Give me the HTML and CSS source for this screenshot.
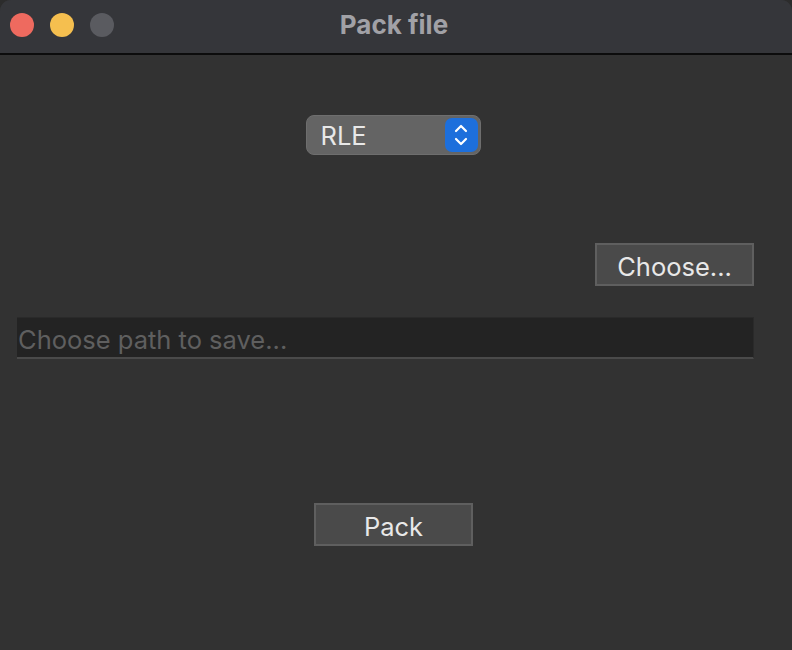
FILE: index.html
```html
<!DOCTYPE html>
<html>
<head>
<meta charset="utf-8">
<link rel="stylesheet" href="styles.css">
</head>
<body>
<div class="window">
  <div class="titlebar">
    <div class="lights">
      <span class="light red"></span>
      <span class="light yellow"></span>
      <span class="light grey"></span>
    </div>
    <div class="title">Pack file</div>
  </div>
  <div class="content">
    <div class="row-select">
      <div class="select">
        <span class="select-text">RLE</span>
        <span class="stepper">
          <svg width="18" height="26" viewBox="0 0 18 26"><path d="M4 9 L9 4 L14 9" fill="none" stroke="#fff" stroke-width="2.2" stroke-linecap="round" stroke-linejoin="round"/><path d="M4 17 L9 22 L14 17" fill="none" stroke="#fff" stroke-width="2.2" stroke-linecap="round" stroke-linejoin="round"/></svg>
        </span>
      </div>
    </div>
    <div class="row-choose">
      <button class="btn choose">Choose...</button>
    </div>
    <div class="row-input">
      <input class="path" type="text" placeholder="Choose path to save...">
    </div>
    <div class="row-pack">
      <button class="btn pack">Pack</button>
    </div>
  </div>
</div>
</body>
</html>
```
FILE: styles.css
```css
html, body {
  margin: 0;
  padding: 0;
  width: 792px;
  height: 650px;
  background: #2c2c2c;
  overflow: hidden;
}
.window {
  width: 792px;
  height: 650px;
  border-radius: 11px 11px 0 0;
  overflow: hidden;
  background: #323232;
  font-family: Inter, "Helvetica Neue", sans-serif;
  display: flex;
  flex-direction: column;
}
.titlebar {
  height: 53px;
  background: #35363a;
  border-bottom: 2px solid #0c0c0c;
  position: relative;
  display: flex;
  align-items: center;
  justify-content: center;
  flex-shrink: 0;
}
.lights {
  position: absolute;
  left: 10px;
  top: 13px;
  display: flex;
  gap: 16px;
}
.light {
  width: 24px;
  height: 24px;
  border-radius: 50%;
  display: block;
}
.red { background: #ee6a5f; }
.yellow { background: #f5bf4f; }
.grey { background: #5a5b60; }
.title {
  color: #a1a1a6;
  font-size: 26px;
  font-weight: 700;
  margin-top: -4px;
  margin-left: -4px;
}
.content {
  flex: 1;
  display: flex;
  flex-direction: column;
  padding: 0 38px 0 17px;
}
.row-select {
  display: flex;
  justify-content: center;
  padding-top: 60px;
  padding-left: 15px;
}
.select {
  height: 38px;
  background: #646464;
  border: 1px solid #6e6e6e;
  border-radius: 8px;
  display: flex;
  align-items: center;
  justify-content: space-between;
  padding: 0 2px 0 14px;
  box-sizing: content-box;
  width: 157px;
}
.select-text {
  color: #e8e8e8;
  font-size: 25.5px;
  margin-top: 1px;
}
.stepper {
  width: 33px;
  height: 34px;
  background: #1d6fdc;
  border-radius: 7px;
  display: flex;
  align-items: center;
  justify-content: center;
}
.row-choose {
  display: flex;
  justify-content: flex-end;
  padding-top: 88px;
}
.btn {
  width: 159px;
  height: 43px;
  background: #4a4a4a;
  border: 2px solid #5f5f5f;
  color: #e8e8e8;
  font-family: Inter, "Helvetica Neue", sans-serif;
  font-size: 25.5px;
  padding: 3px 0 0 0;
  margin: 0;
}
.row-input {
  padding-top: 31px;
}
.path {
  display: block;
  width: 100%;
  height: 42px;
  box-sizing: border-box;
  background: #232323;
  border: none;
  border-top: 1px solid #2a2a2a;
  border-right: 1px solid #2a2a2a;
  border-bottom: 2px solid #4a4a4a;
  color: #e8e8e8;
  font-family: Inter, "Helvetica Neue", sans-serif;
  font-size: 25.5px;
  padding: 3px 0 0 1px;
  margin: 0;
  outline: none;
}
.path::placeholder {
  color: #5f5f5f;
}
.row-pack {
  display: flex;
  justify-content: center;
  padding-top: 144px;
  padding-left: 16px;
}
```
